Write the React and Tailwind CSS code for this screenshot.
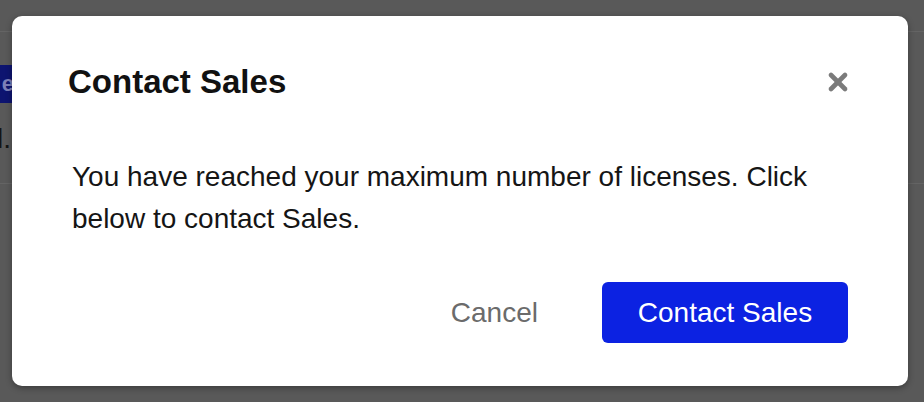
import { X } from "lucide-react";

const font = { fontFamily: '"Liberation Sans", Arial, sans-serif' };

export default function App() {
  return (
    <div
      className="relative w-[924px] h-[402px] overflow-hidden bg-[#595959]"
      style={font}
    >
      {/* page behind the overlay */}
      <div className="flex flex-col">
        <div className="h-[32px] border-b border-[#646464]" />
        <div className="h-[152px] border-b border-[#646464] flex flex-col pt-[33px]">
          <div className="w-[12px] h-[38px] bg-[#0d1470] overflow-hidden flex items-center justify-end">
            <span className="text-[22px] font-bold text-[#7d80b8] leading-none -mr-[2px]">e</span>
          </div>
          <div className="text-[28px] text-[#141414] leading-none mt-[22px] -ml-[3px]">l.</div>
        </div>
      </div>

      {/* dialog */}
      <div className="absolute left-[12px] top-[16px] w-[896px] h-[370px] bg-white rounded-[10px] shadow-[0_2px_6px_rgba(0,0,0,0.35)] flex flex-col pl-[56px] pr-[60px] pt-[46px]">
        <div className="flex items-start justify-between">
          <h2 className="text-[33px] font-bold text-[#111] leading-[40px]">Contact Sales</h2>
          <button className="mt-[6px] -mr-[4px] text-[#7b7b7b]">
            <X size={28} strokeWidth={4} />
          </button>
        </div>
        <p className="mt-[54px] ml-[4px] text-[28px] text-[#151515] leading-[42px] max-w-[770px]">
          You have reached your maximum number of licenses. Click below to contact Sales.
        </p>
        <div className="mt-auto mb-[43px] flex items-center justify-end gap-[64px]">
          <button className="text-[28px] text-[#6b6b6b]">Cancel</button>
          <button className="w-[246px] h-[61px] rounded-[6px] bg-[#0c22e2] text-white text-[28px]">
            Contact Sales
          </button>
        </div>
      </div>
    </div>
  );
}
